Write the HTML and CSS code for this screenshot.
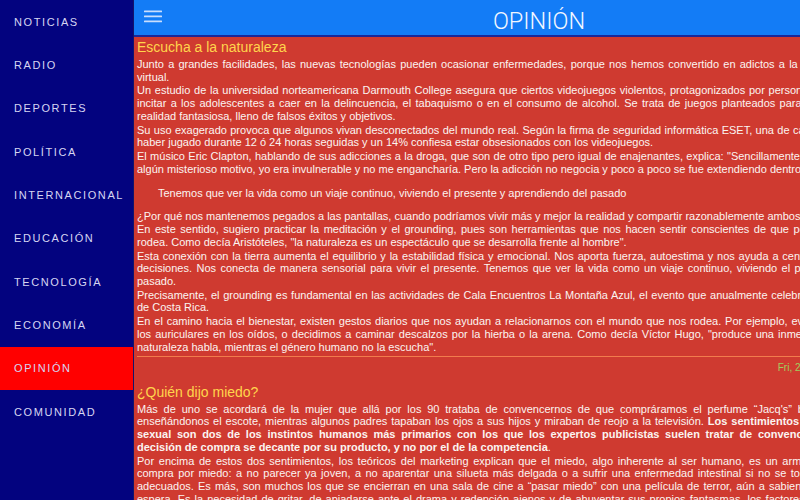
FILE: index.html
```html
<!DOCTYPE html>
<html lang="es">
<head>
<meta charset="utf-8">
<title>Opinión</title>
<link rel="stylesheet" href="styles.css">
</head>
<body>
<div class="app">
  <nav class="sidebar">
    <ul class="menu-list">
      <li class="menu-item">NOTICIAS</li>
      <li class="menu-item">RADIO</li>
      <li class="menu-item">DEPORTES</li>
      <li class="menu-item">POLÍTICA</li>
      <li class="menu-item">INTERNACIONAL</li>
      <li class="menu-item">EDUCACIÓN</li>
      <li class="menu-item">TECNOLOGÍA</li>
      <li class="menu-item">ECONOMÍA</li>
      <li class="menu-item active">OPINIÓN</li>
      <li class="menu-item">COMUNIDAD</li>
    </ul>
  </nav>
  <main class="pane">
    <header class="topbar">
      <button class="hamburger" aria-label="Menú">
        <svg width="18" height="13" viewBox="0 0 18 13"><rect x="0" y="0.5" width="18" height="1.8" rx="0.4"/><rect x="0" y="5.5" width="18" height="1.8" rx="0.4"/><rect x="0" y="10.5" width="18" height="1.8" rx="0.4"/></svg>
      </button>
      <h1 class="title">OPINIÓN</h1>
      <span class="spacer"></span>
    </header>
    <div class="feed">
      <article class="story">
        <h2 class="story-title">Escucha a la naturaleza</h2>
        <div class="story-body">
          <p>Junto a grandes facilidades, las nuevas tecnologías pueden ocasionar enfermedades, porque nos hemos convertido en adictos a la conexión y a una realidad virtual.</p>
          <p>Un estudio de la universidad norteamericana Darmouth College asegura que ciertos videojuegos violentos, protagonizados por personajes sanguinarios, pueden incitar a los adolescentes a caer en la delincuencia, el tabaquismo o en el consumo de alcohol. Se trata de juegos planteados para sumergir al jugador en la realidad fantasiosa, lleno de falsos éxitos y objetivos.</p>
          <p>Su uso exagerado provoca que algunos vivan desconectados del mundo real. Según la firma de seguridad informática ESET, una de cada diez personas asegura haber jugado durante 12 ó 24 horas seguidas y un 14% confiesa estar obsesionados con los videojuegos.</p>
          <p>El músico Eric Clapton, hablando de sus adicciones a la droga, que son de otro tipo pero igual de enajenantes, explica: "Sencillamente pensaba también que, por algún misterioso motivo, yo era invulnerable y no me engancharía. Pero la adicción no negocia y poco a poco se fue extendiendo dentro de mí".</p>
          <blockquote>Tenemos que ver la vida como un viaje continuo, viviendo el presente y aprendiendo del pasado</blockquote>
          <p>¿Por qué nos mantenemos pegados a las pantallas, cuando podríamos vivir más y mejor la realidad y compartir razonablemente ambos mundos?</p>
          <p>En este sentido, sugiero practicar la meditación y el grounding, pues son herramientas que nos hacen sentir conscientes de que pertenecemos a lo que nos rodea.&nbsp;Como decía Aristóteles, "la naturaleza es un espectáculo que se desarrolla frente al hombre".</p>
          <p>Esta conexión con la tierra aumenta el equilibrio y la estabilidad física y emocional. Nos aporta fuerza, autoestima y nos ayuda a centrarnos para tomar buenas decisiones. Nos conecta de manera sensorial para vivir el presente. Tenemos que ver la vida como un viaje continuo, viviendo el presente y aprendiendo del pasado.</p>
          <p>Precisamente, el grounding es fundamental en las actividades de Cala Encuentros La Montaña Azul, el evento que anualmente celebramos en plenas montañas de&nbsp;Costa&nbsp;Rica.</p>
          <p>En el camino hacia el bienestar, existen gestos diarios que nos ayudan a relacionarnos con el mundo que nos rodea. Por ejemplo, evitamos ponernos cada día los&nbsp;auriculares en los oídos, o decidimos a caminar descalzos por la hierba o la arena. Como decía Víctor Hugo, "produce una inmensa tristeza pensar que la naturaleza habla, mientras el género humano no la escucha".</p>
        </div>
        <div class="story-date">Fri, 20 Oct 2017 12:00:00 +0200</div>
      </article>
      <article class="story">
        <h2 class="story-title">¿Quién dijo miedo?</h2>
        <div class="story-body">
          <p>Más de uno se acordará de la mujer que allá por los 90 trataba de convencernos de que compráramos el perfume “Jacq's” bailando provocativamente enseñándonos el escote, mientras algunos padres tapaban los ojos a sus hijos y miraban de reojo a la televisión. <strong>Los sentimientos de miedo y de atracción sexual son dos de los instintos humanos más primarios con los que los expertos publicistas suelen tratar de convencernos para que nuestra decisión&nbsp;de compra se decante por su producto, y no por el de la competencia</strong>.</p>
          <p>Por encima de estos dos sentimientos, los teóricos del marketing explican que el miedo, algo inherente al ser humano, es un arma comercial tan eficaz: se compra&nbsp;por miedo: a no parecer ya joven, a no aparentar una silueta más delgada o a sufrir una enfermedad intestinal si no se toman los productos lácteos adecuados. Es más, son muchos los que se encierran en una sala de cine a “pasar miedo” con una película de terror, aún a sabiendas de lo que siempre les espera. Es la necesidad de gritar, de apiadarse ante el drama y redención ajenos y de ahuyentar sus propios fantasmas, los factores que nos llevan a hacerlo continuamente.</p>
        </div>
      </article>
    </div>
  </main>
</div>
</body>
</html>
```

FILE: styles.css
```css
html, body {
  margin: 0;
  padding: 0;
  width: 800px;
  height: 500px;
  overflow: hidden;
  background: #03037f;
  font-family: "Liberation Sans", Arial, Helvetica, sans-serif;
}

.app {
  display: flex;
  width: 800px;
  height: 500px;
  overflow: hidden;
}

.sidebar {
  flex: 0 0 133px;
  width: 133px;
  height: 500px;
  background: #03037f;
}

.menu-list {
  list-style: none;
  margin: 0;
  padding: 0;
}

.menu-item {
  display: flex;
  align-items: center;
  height: 43.35px;
  padding-left: 14px;
  font-size: 11px;
  letter-spacing: 1.6px;
  color: #d6d6f2;
}

.menu-item.active {
  background: #ff0000;
}

.pane {
  flex: 0 0 810px;
  width: 810px;
  height: 500px;
  border-left: 1px solid #14146a;
  background: #cf3a30;
}

.topbar {
  display: grid;
  grid-template-columns: 1fr auto 1fr;
  align-items: start;
  height: 35px;
  background: #137cf6;
  border-bottom: 2px solid #1b2798;
}

.hamburger {
  justify-self: start;
  margin: 10px 0 0 10px;
  padding: 0;
  border: 0;
  background: none;
  line-height: 0;
}

.hamburger svg {
  fill: #c9defd;
}

.title {
  margin: 0;
  padding-top: 7px;
  font-family: Roboto, "Liberation Sans", sans-serif;
  font-weight: 300;
  font-size: 23.5px;
  line-height: 28px;
  color: #f2f6ff;
}

.feed {
  padding: 0 12px 0 3px;
}

.story-title {
  margin: 0 0 2px;
  padding-top: 1px;
  font-size: 14px;
  font-weight: normal;
  line-height: 18px;
  color: #ffd54c;
}

.story-body {
  font-size: 11px;
  line-height: 12.7px;
  color: #fbf4f0;
  text-align: justify;
  border-bottom: 1px solid #f27c4c;
  padding-bottom: 2px;
}

.story-body p {
  margin: 0 0 1px;
}

.story-body strong {
  font-weight: bold;
}

.story-body blockquote {
  margin: 11.5px 0 10px 21px;
  text-align: left;
}

.story:last-child .story-body {
  border-bottom: 0;
}

.story-date {
  padding: 4.5px 10px 8px 0;
  text-align: right;
  font-size: 10px;
  line-height: 12px;
  color: #9fcf5e;
}
```
